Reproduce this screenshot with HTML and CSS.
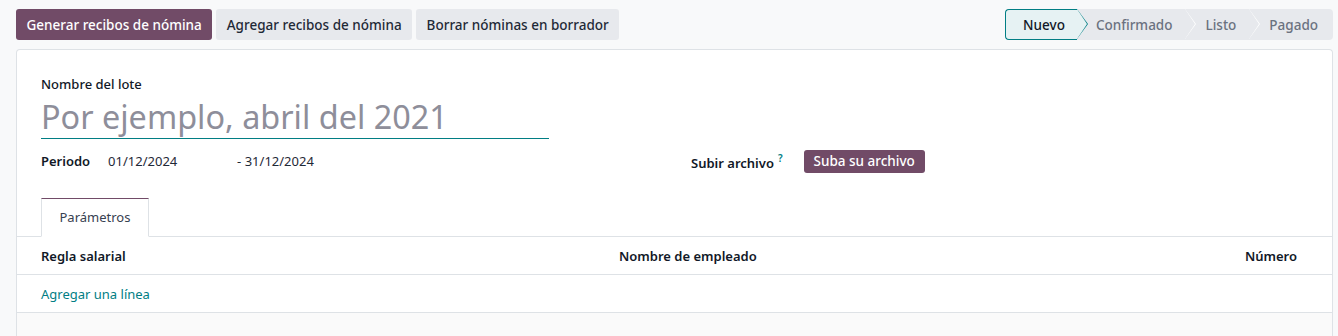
FILE: index.html
```html
<!DOCTYPE html>
<html lang="es">
<head>
  <meta charset="UTF-8">
  <meta name="viewport" content="width=device-width, initial-scale=1.0">
  <title>Lote de nóminas</title>
  <link rel="stylesheet" href="styles.css">
</head>
<body>
  <div class="control-panel">
    <div class="actions">
      <button class="btn btn-primary">Generar recibos de nómina</button>
      <button class="btn btn-secondary">Agregar recibos de nómina</button>
      <button class="btn btn-secondary">Borrar nóminas en borrador</button>
    </div>
    <div class="statusbar">
      <span class="step active">Nuevo</span>
      <span class="step">Confirmado</span>
      <span class="step">Listo</span>
      <span class="step last">Pagado</span>
    </div>
  </div>

  <div class="sheet">
    <div class="title-block">
      <label class="title-label">Nombre del lote</label>
      <div class="title-input">Por ejemplo, abril del 2021</div>
    </div>

    <div class="fields">
      <div class="field">
        <span class="field-label">Periodo</span>
        <span class="date">01/12/2024</span>
        <span class="date date-end">- 31/12/2024</span>
      </div>
      <div class="field">
        <span class="field-label">Subir archivo<sup class="help">?</sup></span>
        <button class="btn-upload">Suba su archivo</button>
      </div>
    </div>

    <div class="tabs">
      <span class="tab active">Parámetros</span>
    </div>

    <table class="list">
      <thead>
        <tr>
          <th class="col-rule">Regla salarial</th>
          <th class="col-employee">Nombre de empleado</th>
          <th class="col-number">Número</th>
        </tr>
      </thead>
      <tbody>
        <tr>
          <td colspan="3"><a class="add-line" href="#">Agregar una línea</a></td>
        </tr>
      </tbody>
    </table>
    <div class="list-filler"></div>
  </div>
</body>
</html>
```

FILE: styles.css
```css
body {
  margin: 0;
  background-color: #f8f9fa;
  font-family: "Noto Sans", "Open Sans", sans-serif;
  font-size: 13px;
  color: #374151;
}
.control-panel {
  display: flex;
  justify-content: space-between;
  align-items: center;
  padding: 9px 5px 9px 16px;
}
.actions {
  display: flex;
  gap: 4px;
}
.btn {
  height: 31px;
  padding: 0 10.5px;
  border: none;
  border-radius: 3px;
  font-family: inherit;
  font-size: 13.5px;
  font-weight: 500;
  cursor: pointer;
}
.btn-primary {
  background-color: #714b67;
  color: white;
}
.btn-secondary {
  background-color: #e7e9ed;
  color: #1f2937;
}
.statusbar {
  display: flex;
  height: 31px;
  background-color: #e7e9ed;
  border-radius: 4px;
}
.step {
  position: relative;
  display: flex;
  align-items: center;
  padding: 0 13px 0 20px;
  font-size: 13.5px;
  font-weight: 500;
  color: #6b7280;
}
.step::after {
  content: "";
  position: absolute;
  right: -11px;
  top: 0;
  width: 0;
  height: 0;
  border-top: 15.5px solid transparent;
  border-bottom: 15.5px solid transparent;
  border-left: 11px solid #fff;
  z-index: 1;
}
.step::before {
  content: "";
  position: absolute;
  right: -10px;
  top: 0;
  width: 0;
  height: 0;
  border-top: 15.5px solid transparent;
  border-bottom: 15.5px solid transparent;
  border-left: 10px solid #e7e9ed;
  z-index: 2;
}
.step.active {
  background-color: #e6f2f3;
  color: #111827;
  border: 1px solid #017e84;
  border-right: none;
  border-radius: 4px 0 0 4px;
  padding: 0 12px 0 17px;
}
.step.active + .step {
  padding-left: 19px;
}
.step.active::after {
  top: -1px;
  right: -11px;
  border-left-color: #017e84;
}
.step.active::before {
  top: -1px;
  right: -10px;
  border-left-color: #e6f2f3;
}
.step.last {
  padding-right: 15px;
}
.step.last::after,
.step.last::before {
  display: none;
}
.sheet {
  margin: 0 5px 0 16px;
  background-color: white;
  border: 1px solid #dee2e6;
  border-bottom: none;
  border-radius: 4px 4px 0 0;
}
.title-block {
  padding: 25px 24px 0 24px;
}
.title-label {
  display: block;
  font-weight: 500;
  color: #111827;
  line-height: 18px;
}
.title-input {
  width: 508px;
  margin-top: 2px;
  font-size: 32.4px;
  line-height: 43px;
  color: #8e8e9a;
  border-bottom: 1px solid #017e84;
}
.fields {
  display: grid;
  grid-template-columns: 650px 1fr;
  padding: 10px 24px 0 24px;
}
.field {
  display: flex;
  align-items: center;
  height: 24px;
}
.field-label {
  font-weight: 600;
  color: #111827;
  margin-right: 18px;
}
.help {
  color: #017e84;
  font-size: 10px;
  margin-left: 4px;
  vertical-align: 6px;
}
.date {
  width: 126px;
  color: #1f2937;
}
.date-end {
  margin-left: 3px;
}
.btn-upload {
  height: 23px;
  padding: 0 10px;
  margin-left: 3px;
  border: none;
  border-radius: 3px;
  background-color: #714b67;
  color: white;
  font-family: inherit;
  font-size: 13.5px;
  font-weight: 500;
}
.tabs {
  display: flex;
  margin-top: 25px;
  padding-left: 24px;
  border-bottom: 1px solid #dee2e6;
}
.tab {
  padding: 0 17.5px;
  height: 37px;
  line-height: 37px;
  margin-bottom: -1px;
  color: #374151;
}
.tab.active {
  background-color: white;
  border: 1px solid #dee2e6;
  border-top: 1px solid #714b67;
  border-bottom: 1px solid white;
}
.list {
  width: 100%;
  border-collapse: collapse;
}
.list th,
.list td {
  height: 37px;
  padding: 0 24px;
  border-bottom: 1px solid #dee2e6;
  text-align: left;
}
.list th {
  font-weight: 600;
  color: #111827;
}
.col-rule {
  width: 530px;
}
.col-number {
  text-align: right !important;
  padding-right: 35px !important;
}
.add-line {
  color: #017e84;
  text-decoration: none;
}
.list-filler {
  height: 30px;
  background-color: #fafafa;
}
```
